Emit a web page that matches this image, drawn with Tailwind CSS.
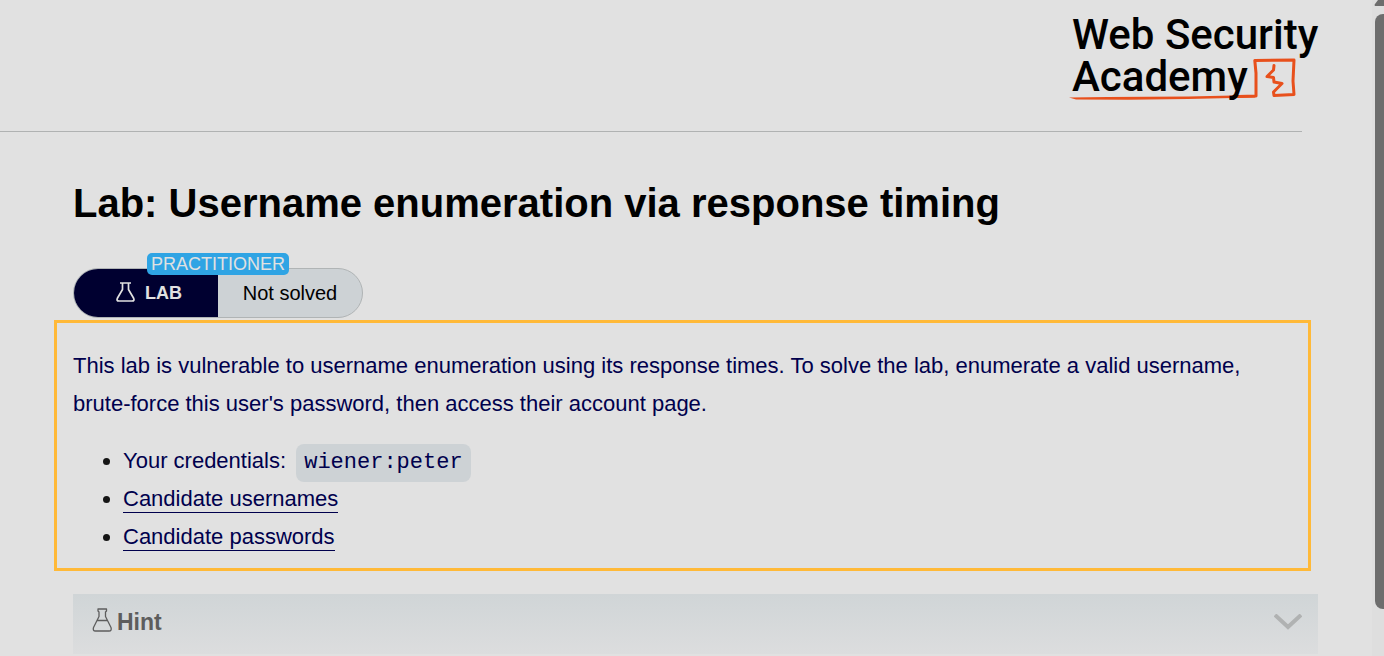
<!DOCTYPE html>
<html lang="en">
<head>
<meta charset="utf-8">
<meta name="viewport" content="width=device-width, initial-scale=1">
<title>Lab: Username enumeration via response timing</title>
<script src="https://cdn.jsdelivr.net/npm/@tailwindcss/browser@4"></script>
</head>
<body class="flex h-screen overflow-hidden bg-[#e1e1e1] font-['Liberation_Sans',Arial,sans-serif] text-black">
<div class="min-w-0 flex-1">
  <header class="mr-[70px] flex h-[132px] justify-end border-b border-[#b0b2b2]">
    <a href="#" aria-label="Web Security Academy" class="relative -mr-4 block w-[250px] pt-[14px] pl-1 font-[Roboto,sans-serif] text-[42px] leading-[42px] font-medium whitespace-nowrap">
      <svg class="absolute top-14 left-0 h-[46px] w-[230px]" viewBox="0 0 230 46" fill="none" stroke="#e8501c" stroke-linecap="round" stroke-linejoin="round" aria-hidden="true">
        <path stroke="none" fill="#e8501c" d="M1 41.500L40 41 120 40.500 187 39V41.500L120 43 60 43.800 8 43.500Z"/>
        <path stroke-width="3" d="M170 40.500L188 40V17L186.800 4.500 226 4 225 25 226 38.500 206 39.500 205.500 36 214 27.500 206 26 205.500 21.500 199 20.500 205.500 14 206 9.500"/>
      </svg>
      <span class="relative block">Web Security</span>
      <span class="relative block">Academy</span>
    </a>
  </header>
  <main class="mr-[54px] ml-[73px]">
    <h1 class="pt-[47px] text-[40px] leading-12 font-bold">Lab: Username enumeration via response timing</h1>
    <div class="relative mt-[41px] flex h-[50px] w-[290px] rounded-full border border-[#b0b4b5] bg-[#cdd2d5] text-xl">
      <div class="flex w-36 items-center gap-2 rounded-l-full bg-[#000030] pl-[39px] text-lg font-bold text-[#e1e1e1]">
        <svg class="h-6 w-6" viewBox="0 0 24 24" fill="none" stroke="#e1e1e1" stroke-width="1.700" stroke-linejoin="round" aria-hidden="true"><path d="M7 2H18M9.500 2.500V8.500L4.500 17Q3 20 6 20H19Q22 20 20.500 17L15.500 8.500V2.500"/></svg>
        <span>LAB</span>
      </div>
      <p class="flex flex-1 items-center justify-center">Not solved</p>
      <span class="absolute -top-4 left-[73px] rounded-[5px] bg-[#2fa4e4] px-1 text-lg leading-[22px] text-[#e1e1e1]">PRACTITIONER</span>
    </div>
    <section class="mt-[2px] mr-[7px] -ml-[19px] border-3 border-[#ffb938] px-4 pt-6 pb-3 text-[22px] leading-[38px] text-[#00004d]">
      <p>This lab is vulnerable to username enumeration using its response times. To solve the lab, enumerate a valid username, brute-force this user's password, then access their account page.</p>
      <ul class="mt-[19px] list-disc pl-[50px] marker:text-[#151515]">
        <li>Your credentials: <code class="ml-1 rounded-lg bg-[#cdd2d5] px-2 pt-[6px] pb-[7px] font-['Liberation_Mono','Courier_New',monospace] text-[22px] leading-none">wiener:peter</code></li>
        <li><a href="#" class="inline-block border-b border-[#00004d] leading-[26px]">Candidate usernames</a></li>
        <li><a href="#" class="inline-block border-b border-[#00004d] leading-[26px]">Candidate passwords</a></li>
      </ul>
    </section>
    <button type="button" class="mt-[23px] flex h-[60px] w-full items-center bg-linear-to-b from-[#d0d5d7] to-[#dcddde] px-4 pb-1 text-left text-[23px] font-bold text-[#5d5d5d]">
      <svg class="mr-1 mb-1 h-6 w-6" viewBox="0 0 24 24" fill="none" stroke="#5d5d5d" stroke-width="1.300" stroke-linejoin="round" aria-hidden="true"><path d="M9 1H17.500V3L16.500 4V8.500L22 19.500Q23 23 20 23H6.500Q3.500 23 4.500 19.500L10 8.500V4L9 3ZM8 12.500H18.500"/></svg>
      <span class="flex-1">Hint</span>
      <svg class="h-4 w-7" viewBox="0 0 28 16" fill="none" stroke="#b0b2b2" stroke-width="4" aria-hidden="true"><path d="M1 1L14 13 27 1"/></svg>
    </button>
  </main>
</div>
<div class="relative w-3 shrink-0 bg-[#dedede]" aria-hidden="true">
  <div class="mt-[14px] ml-[3px] h-[595px] rounded-l-lg bg-[#6d6d6d]"></div>
  <svg class="absolute top-0 left-[2px] h-2 w-[10px]" viewBox="0 0 10 8" fill="#6d6d6d"><path d="M4 0H10V6H1Q0 5 1 4Z"/></svg>
</div>
</body>
</html>
